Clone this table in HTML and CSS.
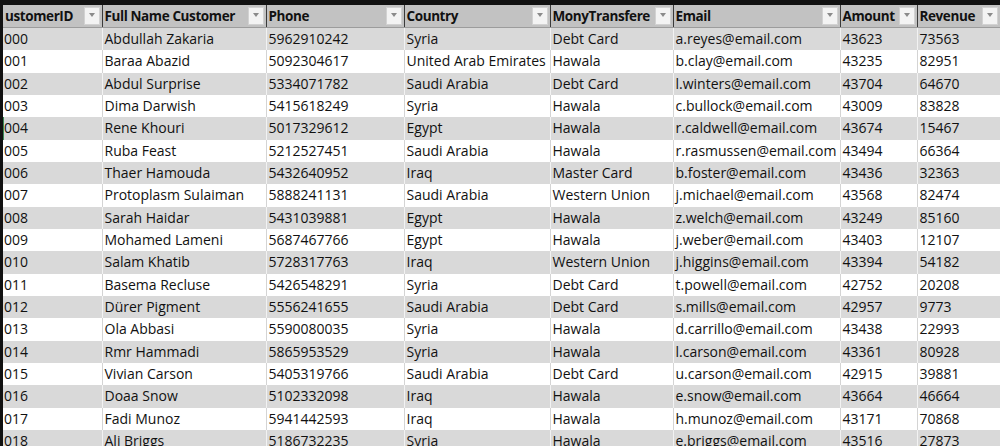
FILE: index.html
```html
<!DOCTYPE html>
<html>
<head>
<meta charset="utf-8">
<link rel="stylesheet" href="styles.css">
</head>
<body>
<div class="sheet">
<table class="grid">
<colgroup>
<col class="c-a"><col class="c-b"><col class="c-c"><col class="c-d"><col class="c-e"><col class="c-f"><col class="c-g"><col class="c-h">
</colgroup>
<thead>
<tr>
<th><span class="lbl">ustomerID</span><span class="dd"></span></th>
<th><span class="lbl">Full Name Customer</span><span class="dd"></span></th>
<th><span class="lbl">Phone</span><span class="dd"></span></th>
<th><span class="lbl">Country</span><span class="dd"></span></th>
<th><span class="lbl">MonyTransfere</span><span class="dd"></span></th>
<th><span class="lbl">Email</span><span class="dd"></span></th>
<th><span class="lbl">Amount</span><span class="dd"></span></th>
<th><span class="lbl">Revenue</span><span class="dd"></span></th>
</tr>
</thead>
<tbody>
<tr class="odd"><td>000</td><td>Abdullah Zakaria</td><td>5962910242</td><td>Syria</td><td>Debt Card</td><td>a.reyes@email.com</td><td>43623</td><td>73563</td></tr>
<tr class="even"><td>001</td><td>Baraa Abazid</td><td>5092304617</td><td>United Arab Emirates</td><td>Hawala</td><td>b.clay@email.com</td><td>43235</td><td>82951</td></tr>
<tr class="odd"><td>002</td><td>Abdul Surprise</td><td>5334071782</td><td>Saudi Arabia</td><td>Debt Card</td><td>l.winters@email.com</td><td>43704</td><td>64670</td></tr>
<tr class="even"><td>003</td><td>Dima Darwish</td><td>5415618249</td><td>Syria</td><td>Hawala</td><td>c.bullock@email.com</td><td>43009</td><td>83828</td></tr>
<tr class="odd sel"><td>004</td><td>Rene Khouri</td><td>5017329612</td><td>Egypt</td><td>Hawala</td><td>r.caldwell@email.com</td><td>43674</td><td>15467</td></tr>
<tr class="even"><td>005</td><td>Ruba Feast</td><td>5212527451</td><td>Saudi Arabia</td><td>Hawala</td><td>r.rasmussen@email.com</td><td>43494</td><td>66364</td></tr>
<tr class="odd"><td>006</td><td>Thaer Hamouda</td><td>5432640952</td><td>Iraq</td><td>Master Card</td><td>b.foster@email.com</td><td>43436</td><td>32363</td></tr>
<tr class="even"><td>007</td><td>Protoplasm Sulaiman</td><td>5888241131</td><td>Saudi Arabia</td><td>Western Union</td><td>j.michael@email.com</td><td>43568</td><td>82474</td></tr>
<tr class="odd"><td>008</td><td>Sarah Haidar</td><td>5431039881</td><td>Egypt</td><td>Hawala</td><td>z.welch@email.com</td><td>43249</td><td>85160</td></tr>
<tr class="even"><td>009</td><td>Mohamed Lameni</td><td>5687467766</td><td>Egypt</td><td>Hawala</td><td>j.weber@email.com</td><td>43403</td><td>12107</td></tr>
<tr class="odd"><td>010</td><td>Salam Khatib</td><td>5728317763</td><td>Iraq</td><td>Western Union</td><td>j.higgins@email.com</td><td>43394</td><td>54182</td></tr>
<tr class="even"><td>011</td><td>Basema Recluse</td><td>5426548291</td><td>Syria</td><td>Debt Card</td><td>t.powell@email.com</td><td>42752</td><td>20208</td></tr>
<tr class="odd"><td>012</td><td>Dürer Pigment</td><td>5556241655</td><td>Saudi Arabia</td><td>Debt Card</td><td>s.mills@email.com</td><td>42957</td><td>9773</td></tr>
<tr class="even"><td>013</td><td>Ola Abbasi</td><td>5590080035</td><td>Syria</td><td>Hawala</td><td>d.carrillo@email.com</td><td>43438</td><td>22993</td></tr>
<tr class="odd"><td>014</td><td>Rmr Hammadi</td><td>5865953529</td><td>Syria</td><td>Hawala</td><td>l.carson@email.com</td><td>43361</td><td>80928</td></tr>
<tr class="even"><td>015</td><td>Vivian Carson</td><td>5405319766</td><td>Saudi Arabia</td><td>Debt Card</td><td>u.carson@email.com</td><td>42915</td><td>39881</td></tr>
<tr class="odd"><td>016</td><td>Doaa Snow</td><td>5102332098</td><td>Iraq</td><td>Hawala</td><td>e.snow@email.com</td><td>43664</td><td>46664</td></tr>
<tr class="even"><td>017</td><td>Fadi Munoz</td><td>5941442593</td><td>Iraq</td><td>Hawala</td><td>h.munoz@email.com</td><td>43171</td><td>70868</td></tr>
<tr class="odd"><td>018</td><td>Ali Briggs</td><td>5186732235</td><td>Syria</td><td>Hawala</td><td>e.briggs@email.com</td><td>43516</td><td>27873</td></tr>
</tbody>
</table>
</div>
</body>
</html>
```
FILE: styles.css
```css
html, body {
  margin: 0;
  padding: 0;
  background: #000;
  overflow: hidden;
}
.sheet {
  width: 1000px;
  height: 446px;
  padding: 5px 0 0 3px;
  box-sizing: border-box;
  background: #111;
  overflow: hidden;
}
.grid {
  border-collapse: collapse;
  table-layout: fixed;
  width: 997px;
  font-family: "Open Sans", "Liberation Sans", sans-serif;
  font-size: 14px;
  color: #111;
}
.c-a { width: 99px; }
.c-b { width: 164px; }
.c-c { width: 138px; }
.c-d { width: 146px; }
.c-e { width: 123px; }
.c-f { width: 167px; }
.c-g { width: 77px; }
.c-h { width: 83px; }

th {
  position: relative;
  height: 22px;
  padding: 0 0 0 2px;
  background: #c2c2c2;
  border-left: 1px solid #3a3a3a;
  border-bottom: 1px solid #9c9c9c;
  text-align: left;
  font-weight: 700;
  font-size: 13.5px;
  letter-spacing: -0.4px;
  white-space: nowrap;
  overflow: hidden;
}
th:first-child { border-left: none; }
th .lbl {
  display: inline-block;
  vertical-align: middle;
  line-height: 22px;
}
.dd {
  position: absolute;
  right: 2px;
  top: 2px;
  width: 16px;
  height: 18px;
  box-sizing: border-box;
  background: #f3f3f3;
  border: 1px solid #d2d2d2;
}
.dd::after {
  content: "";
  position: absolute;
  left: 4px;
  top: 5px;
  border-left: 3.5px solid transparent;
  border-right: 3.5px solid transparent;
  border-top: 4px solid #8a8a8a;
}

td {
  height: 22.33px;
  padding: 0 0 0 2px;
  line-height: 22px;
  white-space: nowrap;
  overflow: hidden;
  border-left: 1px solid #e9e9e9;
}
tr.odd td { background: #d9d9d9; border-left-color: #f2f2f2; }
tr.even td { background: #ffffff; border-left-color: #d4d4d4; }
tr.odd td:first-child, tr.even td:first-child { border-left: none; padding-left: 1px; }
tr.sel td:first-child { box-shadow: inset 1px 0 0 #3c8a55; }
```
